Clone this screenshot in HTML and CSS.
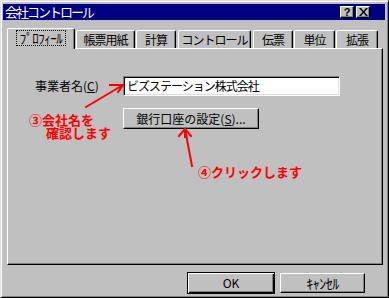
FILE: index.html
```html
<!doctype html>
<html>
<head>
<meta charset="utf-8">
<link rel="stylesheet" href="styles.css">
</head>
<body>
<div class="window">
	<div class="titlebar">
		<span class="title">会社コントロール</span>
		<div class="capbtns">
			<span class="capbtn">?</span>
			<span class="capbtn">
				<svg width="9" height="8" viewBox="0 0 9 8"><path d="M0 0h2l2.5 3 2.5-3h2L5.5 4 9 8H7L4.5 5 2 8H0l3.5-4z" fill="#000"/></svg>
			</span>
		</div>
	</div>
	<div class="tabs">
		<span class="tab on"><span class="focus">ﾌﾟﾛﾌｨｰﾙ</span></span>
		<span class="tab t2">帳票用紙</span>
		<span class="tab t3">計算</span>
		<span class="tab t4">コントロール</span>
		<span class="tab t5">伝票</span>
		<span class="tab t6">単位</span>
		<span class="tab t7">拡張</span>
	</div>
	<div class="panel">
		<div class="row">
			<span class="label">事業者名(<u>C</u>)</span>
			<div class="input">ビズステーション株式会社</div>
		</div>
		<div class="row">
			<span class="btn bank">銀行口座の設定(<u>S</u>)...</span>
		</div>

		<div class="note note3a">③会社名を</div>
		<div class="note note3b">確認します</div>
		<div class="note note4">④クリックします</div>
		<svg class="arrows" width="376" height="216" viewBox="7 43 376 216">
			<g stroke="#f00" stroke-width="2" fill="none" stroke-linecap="square">
				<path d="M86 102L123 80M110 80H123M123 80L118 87"/>
				<path d="M192 161L185 124M185 124L179 131M185 124L191 131M185 124V132"/>
			</g>
		</svg>
	</div>
	<div class="footer">
		<span class="btn ok">OK</span>
		<span class="btn cancel">ｷｬﾝｾﾙ</span>
	</div>
</div>
</body>
</html>
```

FILE: styles.css
```css
* {margin:0; padding:0; box-sizing:border-box;}
body {background:#c0c0c0; font-family:"Noto Sans CJK JP", "Liberation Sans", sans-serif; font-size:12px; color:#000;}

.window {width:389px; height:298px; background:#c0c0c0; padding:2px 3px 2px 2px; border:1px solid; border-color:#dfdfdf #000 #000 #dfdfdf; box-shadow:inset 1px 1px #fff, inset -1px -1px #808080;}

.titlebar {height:16px; margin-top:1px; background:#000080; display:flex; align-items:center; justify-content:space-between; padding:0 15px 0 2px;}
.title {color:#fff; font-size:13px; letter-spacing:-2px; line-height:16px;}
.capbtns {display:flex; gap:2px;}
.capbtn {width:14px; height:12px; background:#c0c0c0; border:1px solid; border-color:#fff #000 #000 #fff; box-shadow:inset -1px -1px #808080; display:flex; align-items:center; justify-content:center; font:bold 11px "Liberation Sans", sans-serif; line-height:10px;}

.tabs {display:flex; align-items:flex-end; height:24px; margin-top:4px; padding-left:4px; position:relative; z-index:1;}
.tab {height:18px; border:1px solid; border-bottom:none; border-color:#fff #000 #000 #fff; border-radius:2px 2px 0 0; box-shadow:inset -1px 0 #808080; display:flex; align-items:center; justify-content:center; line-height:14px; background:#c0c0c0; white-space:nowrap; letter-spacing:-1px;}
.tab.on {height:21px; width:68px; margin-bottom:-1px; padding-bottom:2px;}
.focus {outline:1px dotted #000; padding:0 3px; font-size:13px; letter-spacing:-0.5px;}
.t2 {width:59px; margin-left:1px;}
.t3 {width:40px; margin-left:1px;}
.t4 {width:73px; margin-left:2px;}
.t5 {width:40px; margin-left:2px;}
.t6 {width:41px; margin-left:1px;}
.t7 {width:42px; margin-left:1px;}

.panel {position:relative; height:217px; margin:0 0 0 4px; width:376px; border:1px solid; border-color:#fff #000 #000 #fff; box-shadow:inset -1px -1px #808080; padding:27px 0 0 27px;}
.row {display:flex; align-items:center; margin-bottom:12px;}
.label {width:88px; line-height:14px;}
.input {width:217px; height:20px; background:#fff; border:1px solid; border-color:#808080 #fff #fff #808080; box-shadow:inset 1px 1px #000, inset -1px -1px #dfdfdf; padding:2px 0 0 3px; line-height:14px; letter-spacing:-1px;}
.btn {display:flex; align-items:center; justify-content:center; background:#c0c0c0; border:1px solid; border-color:#fff #000 #000 #fff; box-shadow:inset -1px -1px #808080; line-height:14px; white-space:nowrap;}
.bank {margin-left:88px; width:136px; height:21px;}

.note {position:absolute; color:#f00; font-weight:bold; font-size:13px; line-height:13px; white-space:nowrap;}
.note3a {left:21px; top:64px;}
.note3b {left:38px; top:77px;}
.note4 {left:190px; top:116px;}
.arrows {position:absolute; left:-1px; top:-1px;}

.footer {display:flex; justify-content:flex-end; gap:5px; padding:7px 20px 0 0; align-items:flex-start;}
.ok {width:88px; height:22px; border:1px solid #000; box-shadow:inset 1px 1px #fff, inset -1px -1px #000, inset -2px -2px #808080;}
.cancel {width:85px; height:20px; margin-top:1px; font-size:14px; letter-spacing:-0.5px;}
```
